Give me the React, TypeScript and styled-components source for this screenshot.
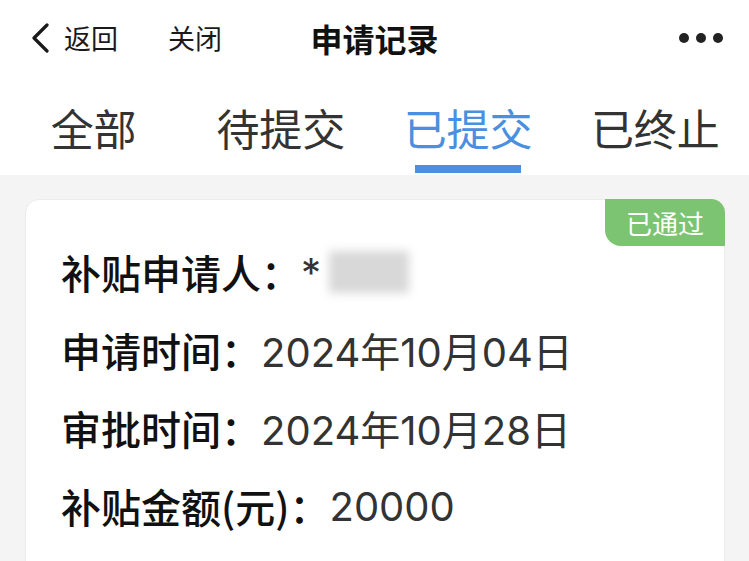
import React from 'react'
import styled, { createGlobalStyle } from 'styled-components'

const GlobalStyle = createGlobalStyle`
  html, body {
    margin: 0;
    padding: 0;
    background: #ffffff;
  }
  body {
    font-family: "Noto Sans CJK SC", "Noto Sans", sans-serif;
    color: #222;
  }
`

const Screen = styled.div`
  width: 749px;
  height: 561px;
  overflow: hidden;
  display: flex;
  flex-direction: column;
  background: #f4f4f4;
`

const NavBar = styled.div`
  position: relative;
  flex-shrink: 0;
  height: 75px;
  display: flex;
  align-items: center;
  background: #fff;
  padding: 0 26px 0 30px;
`

const NavLeft = styled.div`
  display: flex;
  align-items: center;
`

const NavButton = styled.span<{ $gap?: number }>`
  font-size: 27px;
  color: #1a1a1a;
  margin-left: ${({ $gap }) => $gap ?? 0}px;
  line-height: 1;
`

const Title = styled.div`
  position: absolute;
  left: 0;
  right: 0;
  top: 0;
  bottom: 0;
  display: flex;
  align-items: center;
  justify-content: center;
  font-size: 32px;
  font-weight: 700;
  color: #111;
  pointer-events: none;
`

const More = styled.div`
  margin-left: auto;
  display: flex;
  gap: 7px;
  padding-top: 1px;
`

const Dot = styled.span`
  width: 10px;
  height: 10px;
  border-radius: 50%;
  background: #222;
`

const Tabs = styled.div`
  flex-shrink: 0;
  height: 100px;
  display: grid;
  grid-template-columns: repeat(4, 1fr);
  background: #fff;
`

const Tab = styled.div<{ $active?: boolean }>`
  position: relative;
  display: flex;
  justify-content: center;
  padding-top: 25px;
  font-size: 43px;
  line-height: 54px;
  color: ${({ $active }) => ($active ? '#4a8fe0' : '#333')};

  &::after {
    content: '';
    display: ${({ $active }) => ($active ? 'block' : 'none')};
    position: absolute;
    left: 50%;
    bottom: 2px;
    width: 106px;
    height: 8px;
    margin-left: -53px;
    background: #4a8fe0;
  }
`

const List = styled.div`
  flex: 1;
  min-height: 0;
  overflow: hidden;
  padding: 24px 24px 0 25px;
`

const Card = styled.div`
  position: relative;
  background: #fff;
  border: 1px solid #ebebeb;
  border-radius: 14px;
  padding: 33px 35px 20px;
  min-height: 400px;
`

const Badge = styled.div`
  position: absolute;
  top: -1px;
  right: -1px;
  width: 120px;
  height: 47px;
  background: #7cc471;
  border-radius: 0 14px 0 16px;
  color: #fff;
  font-size: 26px;
  display: flex;
  align-items: center;
  justify-content: center;
`

const Row = styled.div`
  display: flex;
  align-items: center;
  height: 78px;
  font-size: 40px;
  white-space: nowrap;
`

const Label = styled.span`
  font-weight: 500;
  color: #111;
`

const Value = styled.span`
  font-family: Inter, "Noto Sans CJK SC", sans-serif;
  color: #333;
`

const Masked = styled.span`
  display: inline-block;
  width: 80px;
  height: 42px;
  margin-left: 8px;
  background: #d8d8d8;
  filter: blur(5px);
`

const Chevron = () => (
  <svg width="20" height="30" viewBox="0 0 20 30">
    <path d="M17 2 L4 15 L17 28" fill="none" stroke="#1a1a1a" strokeWidth="3.2" strokeLinecap="round" strokeLinejoin="round" />
  </svg>
)

const tabs = ['全部', '待提交', '已提交', '已终止']

const App = () => {
  return (
    <>
      <GlobalStyle />
      <Screen>
        <NavBar>
          <NavLeft>
            <Chevron />
            <NavButton $gap={14}>返回</NavButton>
            <NavButton $gap={50}>关闭</NavButton>
          </NavLeft>
          <Title>申请记录</Title>
          <More>
            <Dot />
            <Dot />
            <Dot />
          </More>
        </NavBar>
        <Tabs>
          {tabs.map((t) => (
            <Tab key={t} $active={t === '已提交'}>
              {t}
            </Tab>
          ))}
        </Tabs>
        <List>
          <Card>
            <Badge>已通过</Badge>
            <Row>
              <Label>补贴申请人：</Label>
              <Value>*</Value>
              <Masked />
            </Row>
            <Row>
              <Label>申请时间：</Label>
              <Value>2024年10月04日</Value>
            </Row>
            <Row>
              <Label>审批时间：</Label>
              <Value>2024年10月28日</Value>
            </Row>
            <Row>
              <Label>补贴金额(元)：</Label>
              <Value>20000</Value>
            </Row>
          </Card>
        </List>
      </Screen>
    </>
  )
}

export default App
